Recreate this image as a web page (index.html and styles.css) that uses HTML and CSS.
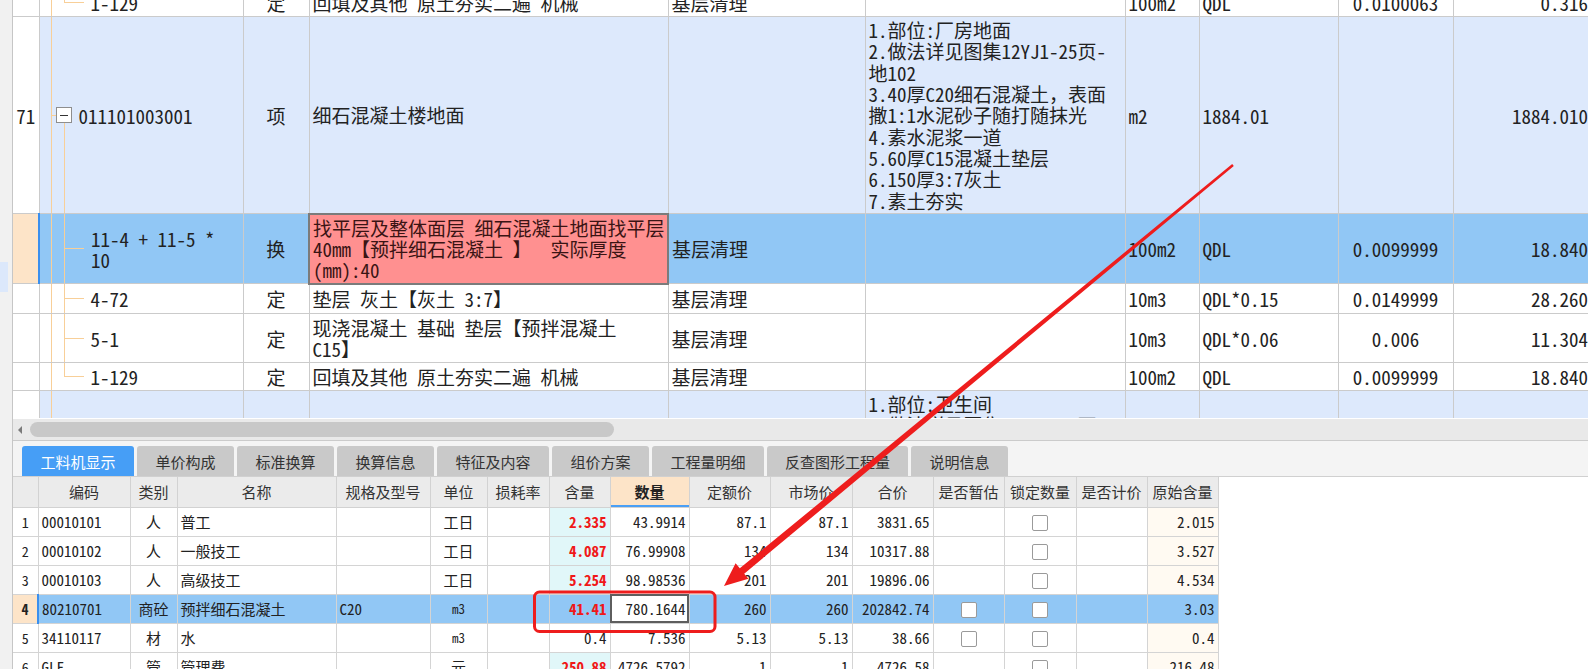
FILE: index.html
```html
<!DOCTYPE html>
<html lang="zh-CN">
<head>
<meta charset="utf-8">
<title>工料机显示</title>
<link rel="stylesheet" href="styles.css">
</head>
<body>
<div class="app">
  <aside class="side"><div class="side-mark"></div></aside>
  <main class="main">
    <div class="grid-top">
      <table class="tg">
        <colgroup>
          <col class="c-rn"><col class="c-code"><col class="c-type"><col class="c-name"><col class="c-work"><col class="c-feat"><col class="c-unit"><col class="c-expr"><col class="c-qty"><col class="c-amt">
        </colgroup>
        <tbody>
          <tr class="h29">
            <td class="rn"></td>
            <td class="code t-last"><div class="node n-child">1-129</div></td>
            <td class="ctr">定</td>
            <td>回填及其他 原土夯实二遍 机械</td>
            <td>基层清理</td>
            <td></td>
            <td>100m2</td>
            <td>QDL</td>
            <td class="ctr">0.0100063</td>
            <td class="num">0.3160</td>
          </tr>
          <tr class="h197 blue">
            <td class="rn">71</td>
            <td class="code t-root"><div class="node n-root"><span class="exp"></span>011101003001</div></td>
            <td class="ctr">项</td>
            <td>细石混凝土楼地面</td>
            <td></td>
            <td class="feat">1.部位:厂房地面<br>2.做法详见图集12YJ1-25页-<br>地102<br>3.40厚C20细石混凝土，表面<br>撒1:1水泥砂子随打随抹光<br>4.素水泥浆一道<br>5.60厚C15混凝土垫层<br>6.150厚3:7灰土<br>7.素土夯实</td>
            <td>m2</td>
            <td>1884.01</td>
            <td class="ctr"></td>
            <td class="num">1884.0100</td>
          </tr>
          <tr class="h70 sel">
            <td class="rn cur"></td>
            <td class="code t-mid bar"><div class="node n-child">11-4 + 11-5 *<br>10</div></td>
            <td class="ctr">换</td>
            <td class="pink">找平层及整体面层 细石混凝土地面找平层<br>40mm【预拌细石混凝土 】&nbsp;&nbsp;实际厚度<br>(mm):40</td>
            <td>基层清理</td>
            <td></td>
            <td>100m2</td>
            <td>QDL</td>
            <td class="ctr">0.0099999</td>
            <td class="num">18.8400</td>
          </tr>
          <tr class="h30">
            <td class="rn"></td>
            <td class="code t-mid"><div class="node n-child">4-72</div></td>
            <td class="ctr">定</td>
            <td>垫层 灰土【灰土 3:7】</td>
            <td>基层清理</td>
            <td></td>
            <td>10m3</td>
            <td>QDL*0.15</td>
            <td class="ctr">0.0149999</td>
            <td class="num">28.2600</td>
          </tr>
          <tr class="h49">
            <td class="rn"></td>
            <td class="code t-mid"><div class="node n-child">5-1</div></td>
            <td class="ctr">定</td>
            <td>现浇混凝土 基础 垫层【预拌混凝土<br>C15】</td>
            <td>基层清理</td>
            <td></td>
            <td>10m3</td>
            <td>QDL*0.06</td>
            <td class="ctr">0.006</td>
            <td class="num">11.3040</td>
          </tr>
          <tr class="h28">
            <td class="rn"></td>
            <td class="code t-last"><div class="node n-child">1-129</div></td>
            <td class="ctr">定</td>
            <td>回填及其他 原土夯实二遍 机械</td>
            <td>基层清理</td>
            <td></td>
            <td>100m2</td>
            <td>QDL</td>
            <td class="ctr">0.0099999</td>
            <td class="num">18.8400</td>
          </tr>
          <tr class="h197 blue top">
            <td class="rn"></td>
            <td class="code"></td>
            <td></td>
            <td></td>
            <td></td>
            <td class="feat">1.部位:卫生间<br>2.做法详见图集12YJ1-25页-<br>地102</td>
            <td></td>
            <td></td>
            <td></td>
            <td></td>
          </tr>
        </tbody>
      </table>
    </div>

    <div class="hscroll">
      <span class="arrow-l"></span>
      <span class="thumb"></span>
    </div>

    <nav class="tabs">
      <div class="tab on w112">工料机显示</div>
      <div class="tab w97">单价构成</div>
      <div class="tab w97">标准换算</div>
      <div class="tab w97">换算信息</div>
      <div class="tab w112">特征及内容</div>
      <div class="tab w97">组价方案</div>
      <div class="tab w112">工程量明细</div>
      <div class="tab w141">反查图形工程量</div>
      <div class="tab w97">说明信息</div>
    </nav>

    <div class="grid-bot">
      <table class="tb">
        <colgroup>
          <col class="b-rn"><col class="b-code"><col class="b-cat"><col class="b-name"><col class="b-spec"><col class="b-unit"><col class="b-loss"><col class="b-cont"><col class="b-qty"><col class="b-dp"><col class="b-mp"><col class="b-sum"><col class="b-est"><col class="b-lock"><col class="b-pr"><col class="b-orig">
        </colgroup>
        <thead>
          <tr>
            <th></th><th>编码</th><th>类别</th><th>名称</th><th>规格及型号</th><th>单位</th><th>损耗率</th><th>含量</th><th class="hl">数量</th><th>定额价</th><th>市场价</th><th>合价</th><th>是否暂估</th><th>锁定数量</th><th>是否计价</th><th>原始含量</th>
          </tr>
        </thead>
        <tbody>
          <tr>
            <td class="rn">1</td><td>00010101</td><td class="ctr">人</td><td>普工</td><td></td><td class="ctr">工日</td><td></td>
            <td class="num cont red">2.335</td><td class="num">43.9914</td><td class="num">87.1</td><td class="num">87.1</td><td class="num">3831.65</td>
            <td></td><td class="ctr"><span class="chk"></span></td><td></td><td class="num orig">2.015</td>
          </tr>
          <tr>
            <td class="rn">2</td><td>00010102</td><td class="ctr">人</td><td>一般技工</td><td></td><td class="ctr">工日</td><td></td>
            <td class="num cont red">4.087</td><td class="num">76.99908</td><td class="num">134</td><td class="num">134</td><td class="num">10317.88</td>
            <td></td><td class="ctr"><span class="chk"></span></td><td></td><td class="num orig">3.527</td>
          </tr>
          <tr>
            <td class="rn">3</td><td>00010103</td><td class="ctr">人</td><td>高级技工</td><td></td><td class="ctr">工日</td><td></td>
            <td class="num cont red">5.254</td><td class="num">98.98536</td><td class="num">201</td><td class="num">201</td><td class="num">19896.06</td>
            <td></td><td class="ctr"><span class="chk"></span></td><td></td><td class="num orig">4.534</td>
          </tr>
          <tr class="sel">
            <td class="rn cur">4</td><td class="bar">80210701</td><td class="ctr">商砼</td><td>预拌细石混凝土</td><td>C20</td><td class="ctr sm">m3</td><td></td>
            <td class="num red">41.41</td><td class="num edit">780.1644</td><td class="num">260</td><td class="num">260</td><td class="num">202842.74</td>
            <td class="ctr"><span class="chk"></span></td><td class="ctr"><span class="chk"></span></td><td></td><td class="num">3.03</td>
          </tr>
          <tr>
            <td class="rn">5</td><td>34110117</td><td class="ctr">材</td><td>水</td><td></td><td class="ctr sm">m3</td><td></td>
            <td class="num">0.4</td><td class="num">7.536</td><td class="num">5.13</td><td class="num">5.13</td><td class="num">38.66</td>
            <td class="ctr"><span class="chk"></span></td><td class="ctr"><span class="chk"></span></td><td></td><td class="num orig">0.4</td>
          </tr>
          <tr>
            <td class="rn">6</td><td>GLF</td><td class="ctr">管</td><td>管理费</td><td></td><td class="ctr">元</td><td></td>
            <td class="num cont red">250.88</td><td class="num">4726.5792</td><td class="num">1</td><td class="num">1</td><td class="num">4726.58</td>
            <td></td><td class="ctr"><span class="chk"></span></td><td></td><td class="num orig">216.48</td>
          </tr>
        </tbody>
      </table>
    </div>
  </main>

  <svg class="annot" width="1588" height="669" viewBox="0 0 1588 669" aria-hidden="true">
    <rect x="534.5" y="592" width="180.5" height="39.5" rx="5" fill="none" stroke="#ee1d1d" stroke-width="3"/>
    <polygon points="1233.8,165.9 744.2,573.7 748.4,578.7 724,586 735.6,563.3 739.8,568.3 1232.2,164.1" fill="#ee1d1d"/>
  </svg>
</div>
</body>
</html>
```

FILE: styles.css
```css
* { box-sizing: border-box; }
html, body { margin: 0; padding: 0; }
body {
  width: 1588px;
  height: 669px;
  overflow: hidden;
  background: #fff;
  color: #222;
  font-family: "Noto Sans Mono CJK SC", "Noto Sans CJK SC", monospace;
}

.app {
  position: relative;
  display: flex;
  width: 1588px;
  height: 669px;
  overflow: hidden;
}

.side {
  flex: 0 0 13px;
  background: #f1f1f1;
  border-right: 1px solid #c6c6c6;
  display: flex;
  flex-direction: column;
}
.side-mark {
  margin-top: 262px;
  width: 8px;
  height: 30px;
  background: #dce8fb;
}

.main {
  flex: 1 1 auto;
  min-width: 0;
  display: flex;
  flex-direction: column;
  overflow: hidden;
}

/* ---------- top grid ---------- */
.grid-top {
  flex: 0 0 418px;
  height: 418px;
  overflow: hidden;
}
.tg {
  border-collapse: collapse;
  table-layout: fixed;
  width: 1588px;
  margin-top: -13px;
  font-size: 19px;
  line-height: 21px;
}
.c-rn { width: 26px; }
.c-code { width: 204px; }
.c-type { width: 66px; }
.c-name { width: 359px; }
.c-work { width: 197px; }
.c-feat { width: 260px; }
.c-unit { width: 74px; }
.c-expr { width: 139px; }
.c-qty { width: 115px; }
.c-amt { width: 148px; }

.tg td {
  border: 1px solid #cbcbcb;
  padding: 0 3px;
  vertical-align: middle;
  white-space: nowrap;
  overflow: hidden;
  background-color: #fff;
}
.tg td:first-child { border-left: 0; }
.tg .ctr { text-align: center; }
.tg .num { text-align: right; padding-right: 3px; }
.tg .rn { text-align: center; padding: 0; background-color: #fff; }
.tg .feat { line-height: 21.3px; }

.h28 { height: 28px; }
.h29 { height: 29px; }
.h30 { height: 30px; }
.h49 { height: 49px; }
.h70 { height: 70px; }
.h197 { height: 197px; }

.tg .blue td { background-color: #dde9fc; }
.tg .blue td.rn { background-color: #fff; }
.tg .sel td { background-color: #91c7f5; }
.tg .sel td.rn, .tb .sel td.rn { background-color: #fde4c8; }
.tg .top td { vertical-align: top; padding-top: 2px; }
.tg .sel td.pink {
  background-color: #ff9090;
  border: 2px solid #7b7b7b;
  color: #3a1414;
}
.bar { border-left: 2px solid #3a8fee !important; }

/* tree lines */
.code {
  --tl: #f8cf98;
  padding: 0 !important;
  background-repeat: no-repeat;
  background-image: linear-gradient(var(--tl), var(--tl));
  background-size: 1px 100%;
  background-position: 11px 0;
}
.t-mid {
  background-image: linear-gradient(var(--tl), var(--tl)), linear-gradient(var(--tl), var(--tl)), linear-gradient(var(--tl), var(--tl));
  background-size: 1px 100%, 1px 100%, 20px 1px;
  background-position: 11px 0, 24px 0, 24px 50%;
}
.t-last {
  background-image: linear-gradient(var(--tl), var(--tl)), linear-gradient(var(--tl), var(--tl)), linear-gradient(var(--tl), var(--tl));
  background-size: 1px 100%, 1px 50%, 20px 1px;
  background-position: 11px 0, 24px 0, 24px 50%;
}
.t-root {
  background-image: linear-gradient(var(--tl), var(--tl)), linear-gradient(var(--tl), var(--tl)), linear-gradient(var(--tl), var(--tl));
  background-size: 1px 100%, 5px 1px, 1px 50%;
  background-position: 11px 0, 11px 50%, 24px 100%;
}
.node { display: flex; align-items: center; }
.n-child { display: block; padding-left: 51px; }
.n-root { padding-left: 16px; gap: 7px; }
.exp {
  flex: 0 0 16px;
  width: 16px;
  height: 16px;
  border: 1px solid #8e8e8e;
  background: #fff;
  display: flex;
  align-items: center;
  justify-content: center;
}
.exp::before {
  content: "";
  width: 8px;
  height: 1px;
  background: #333;
}

/* ---------- scrollbar ---------- */
.hscroll {
  flex: 0 0 23px;
  height: 23px;
  background: #e9e9e9;
  border-top: 1px solid #fff;
  border-bottom: 1px solid #cbcbcb;
  display: flex;
  align-items: center;
  padding-left: 5px;
}
.arrow-l {
  width: 0;
  height: 0;
  border-top: 4px solid transparent;
  border-bottom: 4px solid transparent;
  border-right: 4px solid #7a7a7a;
}
.thumb {
  margin-left: 8px;
  width: 584px;
  height: 15px;
  border-radius: 8px;
  background: #c8c8c8;
}

/* ---------- tabs ---------- */
.tabs {
  flex: 0 0 36px;
  height: 36px;
  background: #f4f4f4;
  border-bottom: 1px solid #d0d0d0;
  display: flex;
  align-items: flex-end;
  gap: 3px;
  padding-left: 9px;
  font-family: "Noto Sans CJK SC", "Noto Sans", sans-serif;
  font-size: 15px;
}
.tab {
  height: 30px;
  background: #c9c9c9;
  color: #333;
  border-radius: 3px 3px 0 0;
  display: flex;
  align-items: center;
  justify-content: center;
}
.tab.on { background: #469ef6; color: #fff; }
.w97 { width: 97px; }
.w112 { width: 112px; }
.w141 { width: 141px; }

/* ---------- bottom grid ---------- */
.grid-bot {
  flex: 1 1 auto;
  overflow: hidden;
  background: #fff;
}
.tb {
  border-collapse: collapse;
  table-layout: fixed;
  width: 1205px;
  font-size: 15px;
  line-height: 18px;
}
.b-rn { width: 25px; }
.b-code { width: 92px; }
.b-cat { width: 47px; }
.b-name { width: 159px; }
.b-spec { width: 94px; }
.b-unit { width: 57px; }
.b-loss { width: 62px; }
.b-cont { width: 61px; }
.b-qty { width: 79px; }
.b-dp { width: 81px; }
.b-mp { width: 82px; }
.b-sum { width: 81px; }
.b-est { width: 71px; }
.b-lock { width: 72px; }
.b-pr { width: 71px; }
.b-orig { width: 71px; }

.tb th {
  height: 30px;
  background: #ebebeb;
  border: 1px solid #d2d2d2;
  border-top: 0;
  font-family: "Noto Sans CJK SC", "Noto Sans", sans-serif;
  font-weight: normal;
  font-size: 15px;
  color: #333;
  padding: 0;
  white-space: nowrap;
  overflow: hidden;
}
.tb th:first-child, .tb td:first-child { border-left: 0; }
.tb th.hl {
  background: #fde4c8;
  font-weight: bold;
  color: #222;
  box-shadow: inset 0 -2px 0 #4a9ff5;
}
.tb td {
  height: 29px;
  border: 1px solid #d4d4d4;
  padding: 0 3px;
  white-space: nowrap;
  overflow: hidden;
  vertical-align: middle;
}
.tb .ctr { text-align: center; }
.tb .num { text-align: right; }
.tb .rn { text-align: center; padding: 0; font-size: 14px; }
.tb .cur { font-weight: bold; }
.tb .sm { font-size: 13px; }
.tb .cont { background-color: #e1f7f9; }
.tb .orig { background-color: #fffaf2; }
.tb .red { color: #f01818; font-weight: bold; }
.tb .sel td { background-color: #91c7f5; }
.tb .sel td.edit {
  background-color: #fff;
  outline: 2px solid #5e5e5e;
  outline-offset: -2px;
}
.chk {
  display: inline-block;
  width: 16px;
  height: 16px;
  border: 1px solid #9a9a9a;
  border-radius: 2px;
  background: #fff;
  vertical-align: middle;
}

/* ---------- annotation overlay ---------- */
.annot {
  position: absolute;
  left: 0;
  top: 0;
  pointer-events: none;
}
```
